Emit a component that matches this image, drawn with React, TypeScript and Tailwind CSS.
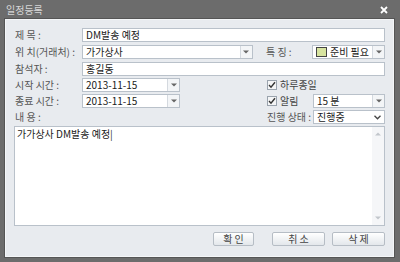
const font = { fontFamily: '"Noto Sans CJK KR", "Noto Sans", sans-serif' }

function Arrow() {
  return (
    <div className="flex w-[12px] shrink-0 items-center justify-center border-l border-[#d4d9df] bg-[#f3f5f7]">
      <svg width="6" height="4" viewBox="0 0 6 4">
        <path d="M0 0.5 L6 0.5 L3 3.5 Z" fill="#666" />
      </svg>
    </div>
  )
}

function Field({ children, arrow = false, className = '' }: { children?: React.ReactNode; arrow?: boolean; className?: string }) {
  return (
    <div className={`flex h-[14px] border border-[#b9c1ca] bg-white ${className}`}>
      <div className="flex min-w-0 flex-1 items-center whitespace-nowrap px-[3px] text-[10px] leading-[12px] text-[#1a1a1a]">{children}</div>
      {arrow && <Arrow />}
    </div>
  )
}

function Check({ label }: { label: string }) {
  return (
    <div className="flex items-center gap-[3px]">
      <div className="flex h-[10px] w-[10px] items-center justify-center border border-[#9aa3ad] bg-[#f4f5f6]">
        <svg width="8" height="8" viewBox="0 0 8 8">
          <path d="M1 4 L3 6.2 L7 1.2" stroke="#333" strokeWidth="1.4" fill="none" />
        </svg>
      </div>
      <span className="whitespace-nowrap text-[10px] leading-[12px] text-[#444]">{label}</span>
    </div>
  )
}

function Label({ children, className = 'w-[67px]' }: { children: React.ReactNode; className?: string }) {
  return <div className={`shrink-0 whitespace-nowrap text-[10px] leading-[12px] text-[#555] ${className}`}>{children}</div>
}

function Button({ children, className }: { children: React.ReactNode; className: string }) {
  return (
    <div
      className={`flex h-[14px] items-center justify-center rounded-[2px] border border-[#b6bdc5] bg-gradient-to-b from-white to-[#e3e7eb] text-[10px] leading-[12px] text-[#444] ${className}`}
    >
      {children}
    </div>
  )
}

export default function App() {
  return (
    <div className="h-[262px] w-[400px] bg-[#6c6c6c]" style={font}>
      <div className="flex h-[19px] items-center justify-between pl-[6px] pr-[12px]">
        <span className="text-[10px] leading-[12px] text-[#d6d6d6]">일정등록</span>
        <svg width="8" height="8" viewBox="0 0 8 8">
          <path d="M1 1 L7 7 M7 1 L1 7" stroke="#fff" strokeWidth="1.8" />
        </svg>
      </div>
      <div className="ml-[5px] h-[238px] w-[389px] border border-[#f4f6f8] bg-[#e8ebef] pl-[9px] pr-[8px] pt-[8px] outline outline-1 outline-[#555]">
        <div className="flex flex-col gap-[3px]">
          <div className="flex items-center">
            <Label>제 목 :</Label>
            <Field className="flex-1">DM발송 예정</Field>
          </div>
          <div className="flex items-center">
            <Label>위 치(거래처) :</Label>
            <Field arrow className="w-[172px]">가가상사</Field>
            <Label className="ml-[13px] w-[46px]">특 징 :</Label>
            <Field arrow className="flex-1">
              <div className="mr-[3px] h-[10px] w-[11px] shrink-0 border border-[#444] bg-[#d7e4a0]" />
              준비 필요
            </Field>
          </div>
          <div className="flex items-center">
            <Label>참석자 :</Label>
            <Field className="flex-1">홍길동</Field>
          </div>
          <div className="-mt-[1px] flex items-center">
            <Label>시작 시간 :</Label>
            <Field arrow className="w-[98px]">2013-11-15</Field>
            <div className="ml-[87px]">
              <Check label="하루종일" />
            </div>
          </div>
          <div className="-mt-[1px] flex items-center">
            <Label>종료 시간 :</Label>
            <Field arrow className="w-[98px]">2013-11-15</Field>
            <div className="ml-[87px] w-[46px]">
              <Check label="알림" />
            </div>
            <Field arrow className="flex-1">15 분</Field>
          </div>
          <div className="-mt-[1px] flex items-center">
            <Label className="w-[252px]">내 용 :</Label>
            <Label className="w-[46px]">진행 상태 :</Label>
            <div className="flex h-[14px] flex-1 items-center justify-between border border-[#b9c1ca] bg-white pl-[3px] pr-[3px]">
              <span className="whitespace-nowrap text-[10px] leading-[12px] text-[#1a1a1a]">진행중</span>
              <svg width="7" height="5" viewBox="0 0 7 5">
                <path d="M0.5 0.8 L3.5 3.8 L6.5 0.8" stroke="#444" strokeWidth="1.3" fill="none" />
              </svg>
            </div>
          </div>
          <div className="-ml-[1px] -mt-[1px] flex h-[100px] border border-[#b9c1ca] bg-white">
            <div className="flex-1 px-[2px] pt-[1px] text-[10px] leading-[12px] text-[#1a1a1a]">
              가가상사 DM발송 예정<span className="text-[#333]">|</span>
            </div>
            <div className="flex w-[12px] flex-col justify-between bg-[#f5f6f8] py-[5px]">
              <svg width="12" height="4" viewBox="0 0 12 4">
                <path d="M3 3.5 L9 3.5 L6 0.5 Z" fill="#c2c6cb" />
              </svg>
              <svg width="12" height="4" viewBox="0 0 12 4">
                <path d="M3 0.5 L9 0.5 L6 3.5 Z" fill="#c2c6cb" />
              </svg>
            </div>
          </div>
        </div>
        <div className="mt-[6px] flex">
          <Button className="ml-[198px] w-[41px]">확 인</Button>
          <Button className="ml-[18px] w-[53px]">취 소</Button>
          <Button className="ml-[7px] w-[53px]">삭 제</Button>
        </div>
      </div>
    </div>
  )
}
